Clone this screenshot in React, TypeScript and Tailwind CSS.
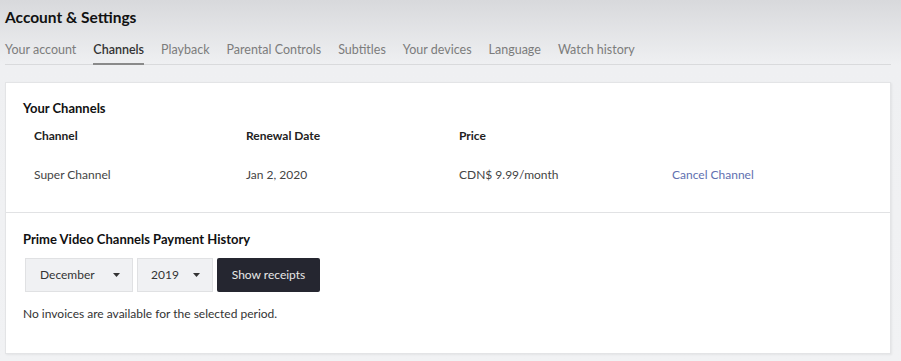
const tabs = ['Your account', 'Channels', 'Playback', 'Parental Controls', 'Subtitles', 'Your devices', 'Language', 'Watch history']

const Caret = () => (
    <svg width="7" height="4" viewBox="0 0 7 4" className="ml-auto">
        <path d="M0 0h7L3.5 4z" fill="#333" />
    </svg>
)

const App = () => {
    return (
        <div className="w-[901px] h-[361px] overflow-hidden bg-gradient-to-b from-[#d8d9dc] via-[#eff0f2] via-[18%] to-[#f1f2f4] font-['Lato',sans-serif] text-[#222]">
            <div className="pl-[5px] pr-[10px]">
                <h1 className="pt-[8px] text-[15.5px] font-bold leading-[18px] text-[#111]">Account &amp; Settings</h1>
                <div className="mt-[16px] flex gap-[17px] border-b border-[#d9dadc] text-[12.5px] leading-[16px]">
                    {tabs.map(t => (
                        <div key={t} className={t === 'Channels' ? 'pb-[5px] border-b-2 border-[#8a8a8a] -mb-px text-[#333] font-semibold' : 'pb-[5px] text-[#7c7c7c]'}>
                            {t}
                        </div>
                    ))}
                </div>
                <div className="mt-[17px] h-[272px] bg-white border border-[#e3e4e6] shadow-[1px_1px_2px_rgba(0,0,0,0.06)]">
                    <div className="h-[130px] border-b border-[#e1e2e4] pl-[17px] pt-[17px]">
                        <h2 className="text-[13px] font-bold leading-[16px] text-[#111]">Your Channels</h2>
                        <div className="mt-[12px] pl-[11px] grid grid-cols-[212px_213px_213px_200px] text-[12px] leading-[16px]">
                            <div className="font-bold text-[#222]">Channel</div>
                            <div className="font-bold text-[#222]">Renewal Date</div>
                            <div className="font-bold text-[#222]">Price</div>
                            <div />
                            <div className="mt-[23px] text-[#444]">Super Channel</div>
                            <div className="mt-[23px] text-[#444]">Jan 2, 2020</div>
                            <div className="mt-[23px] text-[#444]">CDN$ 9.99/month</div>
                            <div className="mt-[23px] text-[#6170b0]">Cancel Channel</div>
                        </div>
                    </div>
                    <div className="pl-[17px] pt-[18px]">
                        <h2 className="text-[13px] font-bold leading-[16px] text-[#111]">Prime Video Channels Payment History</h2>
                        <div className="mt-[11px] ml-[2px] flex gap-[4px] text-[12px]">
                            <div className="w-[108px] h-[34px] flex items-center pl-[14px] pr-[12px] bg-[#f0f1f3] border border-[#e0e1e3] text-[#333]">
                                December <Caret />
                            </div>
                            <div className="w-[76px] h-[34px] flex items-center pl-[13px] pr-[12px] bg-[#f0f1f3] border border-[#e0e1e3] text-[#333]">
                                2019 <Caret />
                            </div>
                            <div className="w-[103px] h-[34px] flex items-center justify-center bg-[#252630] rounded-[2px] text-[#e8e8e8]">
                                Show receipts
                            </div>
                        </div>
                        <p className="mt-[13px] text-[12px] text-[#333]">No invoices are available for the selected period.</p>
                    </div>
                </div>
            </div>
        </div>
    )
}

export default App
